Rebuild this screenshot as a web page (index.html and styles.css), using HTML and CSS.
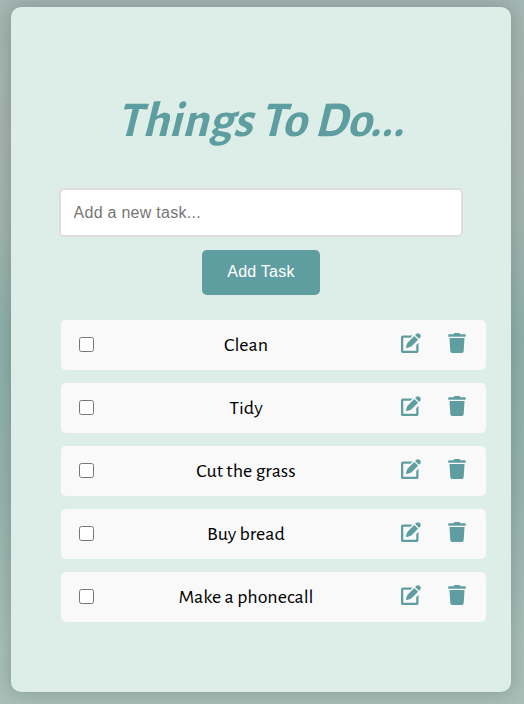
FILE: index.html
```
<!DOCTYPE html>
<html lang="en">
<head>
<meta charset="utf-8">
<title>Things To Do</title>
<link rel="stylesheet" href="styles.css">
</head>
<body>
<svg class="defs" width="0" height="0" aria-hidden="true">
<symbol id="edit" viewBox="0 0 512 512"><path d="M471.6 21.7c-21.9-21.9-57.3-21.9-79.2 0L362.3 51.7l97.9 97.9 30.1-30.1c21.9-21.9 21.9-57.3 0-79.2L471.6 21.7zM172.400 241.700c-6.100 6.100-10.800 13.600-13.500 21.900l-29.600 88.800c-2.900 8.600-.6 18.100 5.800 24.600s15.900 8.700 24.600 5.800l88.800-29.600c8.200-2.700 15.700-7.400 21.900-13.500L437.700 172.300 339.700 74.300 172.400 241.700zM48 64C21 64 0 85 0 112V464c0 27 21 48 48 48H400c27 0 48-21 48-48V250l-58 58V454H58V122H240l58-58z"/></symbol>
<symbol id="trash" viewBox="0 0 448 512"><path d="M432 32H312l-9.400-18.700A24 24 0 0 0 281.100 0H166.800a23.720 23.720 0 0 0-21.400 13.300L136 32H16A16 16 0 0 0 0 48v32a16 16 0 0 0 16 16h416a16 16 0 0 0 16-16V48a16 16 0 0 0-16-16zM32 128l21 339a48 48 0 0 0 48 45h246a48 48 0 0 0 48-45l21-339z"/></symbol>
</svg>
<main class="card">
<h1 class="title">Things To Do...</h1>
<input class="field" type="text" placeholder="Add a new task...">
<button class="add">Add Task</button>
<ul class="tasks">
<li class="task"><input class="check" type="checkbox"><span class="name">Clean</span><svg class="edit"><use href="#edit"/></svg><svg class="trash"><use href="#trash"/></svg></li>
<li class="task"><input class="check" type="checkbox"><span class="name">Tidy</span><svg class="edit"><use href="#edit"/></svg><svg class="trash"><use href="#trash"/></svg></li>
<li class="task"><input class="check" type="checkbox"><span class="name">Cut the grass</span><svg class="edit"><use href="#edit"/></svg><svg class="trash"><use href="#trash"/></svg></li>
<li class="task"><input class="check" type="checkbox"><span class="name">Buy bread</span><svg class="edit"><use href="#edit"/></svg><svg class="trash"><use href="#trash"/></svg></li>
<li class="task"><input class="check" type="checkbox"><span class="name">Make a phonecall</span><svg class="edit"><use href="#edit"/></svg><svg class="trash"><use href="#trash"/></svg></li>
</ul>
</main>
</body>
</html>
```
FILE: styles.css
```
* { box-sizing: border-box; }
body {
  margin: 0;
  height: 704px;
  padding: 7px 13px 12px 11px;
  overflow: hidden;
  background: linear-gradient(#a4b7b2 0%, #a7b5b0 20%, #a2b5af 32%, #8fb0aa 48%, #98b4ae 70%, #a9c0b9 92%, #a8beb7 100%);
  font-family: "Alegreya Sans", Lato, sans-serif;
}
.defs { position: absolute; }
.card {
  height: 685px;
  padding: 80px 25px 0 48px;
  border-radius: 10px;
  background: #ddeee8;
  box-shadow: 0 0 20px rgba(0, 0, 0, 0.2);
  display: flex;
  flex-direction: column;
}
.title {
  margin: 0 0 41px 6px;
  width: 400px;
  height: 60px;
  line-height: 68px;
  text-align: center;
  font-size: 50px;
  font-weight: 700;
  transform: skewX(-14deg);
  white-space: nowrap;
  color: #5f9ea0;
}
.field {
  width: 404px;
  height: 49px;
  padding: 0 12.5px;
  border: 2px solid #ddd;
  border-radius: 5px;
  background: #fff;
  font: 16px "Liberation Sans", sans-serif;
  letter-spacing: 0.28px;
}
.field::placeholder { color: #757575; }
.add {
  width: 118px;
  height: 45px;
  margin: 13px 0 25px 143px;
  padding: 0 0 2px;
  border: 0;
  border-radius: 5px;
  background: #5f9ea0;
  color: #fff;
  font: 16px "Liberation Sans", sans-serif;
  letter-spacing: 0.25px;
}
.tasks {
  margin: 0 0 0 2px;
  padding: 0;
  display: flex;
  flex-direction: column;
  gap: 13px;
  list-style: none;
}
.task {
  height: 50px;
  padding: 0 20px 0 18px;
  display: flex;
  align-items: center;
  border-radius: 5px;
  background: #f9f9f9;
}
.check { width: 15px; height: 15px; margin: 0 0 2px; }
.name {
  flex: 1;
  padding-right: 3px;
  text-align: center;
  font-size: 20px;
  color: #000;
}
.edit, .trash { fill: #5f9ea0; height: 20px; margin-bottom: 3.5px; }
.edit { width: 20px; margin-right: 27px; }
.trash { width: 18px; }
```
